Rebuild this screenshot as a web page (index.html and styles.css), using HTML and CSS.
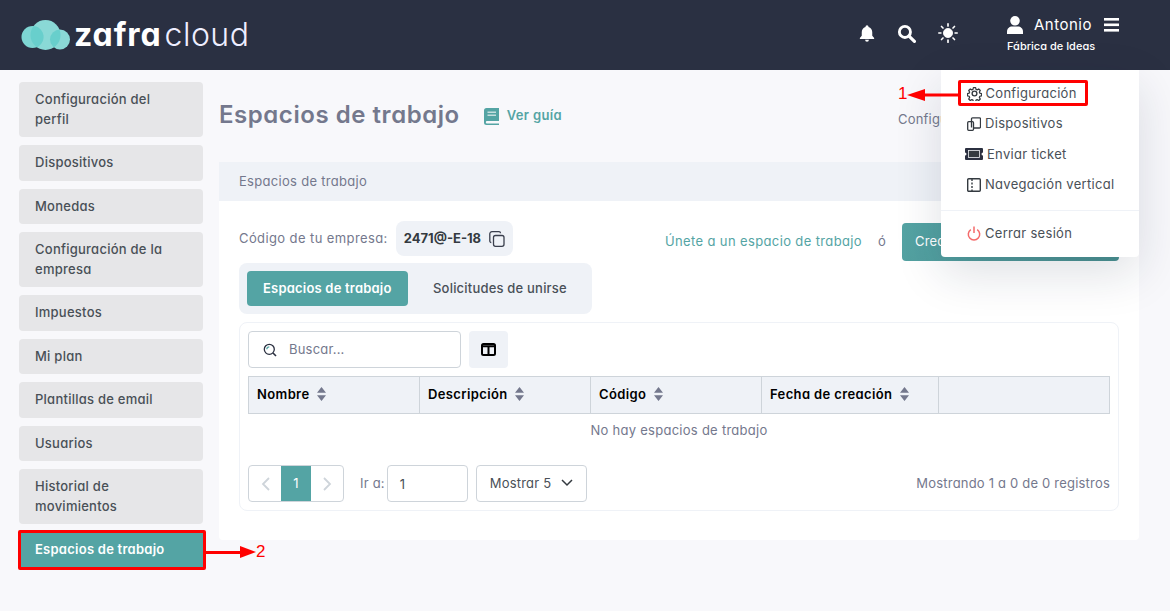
FILE: index.html
```html
<!DOCTYPE html>
<html lang="es">
<head>
<meta charset="utf-8">
<title>Espacios de trabajo</title>
<link rel="stylesheet" href="styles.css">
</head>
<body>
<header class="topbar">
  <div class="logo">
    <svg class="logo-cloud" width="50" height="32" viewBox="0 0 50 32">
      <defs><clipPath id="big"><circle cx="24.500" cy="16" r="15"/></clipPath></defs>
      <circle cx="24.500" cy="16" r="15" fill="#8ad9d6"/>
      <circle cx="11.500" cy="18" r="11" fill="#7ed6d3"/>
      <circle cx="39" cy="20.500" r="10" fill="#8ad9d6"/>
      <g clip-path="url(#big)"><circle cx="11.500" cy="18" r="11" fill="#68cfcc"/><circle cx="39" cy="20.500" r="10" fill="#68cfcc"/></g>
    </svg>
    <span class="logo-a">zafra</span><span class="logo-b">cloud</span>
  </div>
  <div class="top-icons">
    <svg width="18" height="18" viewBox="0 0 24 24" fill="#fff"><path d="M12 1.500a2 2 0 0 0-2 2v.6C6.800 5 5 7.700 5 11v4.500L2.500 18.500V20h19v-1.500L19 15.500V11c0-3.300-1.800-6-5-6.900v-.6a2 2 0 0 0-2-2z"/><path d="M9.500 21a2.500 2.500 0 0 0 5 0z"/></svg>
    <svg width="19" height="19" viewBox="0 0 24 24" fill="none" stroke="#fff"><circle cx="10" cy="10" r="7" stroke-width="3.600"/><path d="M15.500 15.500 22 22" stroke-width="4" stroke-linecap="round"/></svg>
    <svg class="sun" width="20" height="20" viewBox="0 0 24 24" fill="#fff" stroke="#fff"><circle cx="12" cy="12" r="5.500"/><path d="M12 1v2.500M12 20.500V23M1 12h2.500M20.500 12H23M4.200 4.200 6 6M18 18l1.800 1.800M4.200 19.800 6 18M18 6l1.800-1.800" stroke-width="2" stroke-linecap="round"/></svg>
  </div>
  <div class="account">
    <div class="account-top">
      <svg width="16" height="18" viewBox="0 0 16 18" fill="#fff"><circle cx="8" cy="4.800" r="4.800"/><path d="M0 18v-2.500C0 12.500 2.500 10.500 5 10.500h6c2.500 0 5 2 5 5V18z"/></svg>
      <span class="account-name">Antonio</span>
      <svg width="16" height="14" viewBox="0 0 16 14" fill="#fff"><rect y="0" width="15" height="2.600"/><rect y="5.500" width="15" height="2.600"/><rect y="11" width="15" height="2.600"/></svg>
    </div>
    <div class="account-org">Fábrica de Ideas</div>
  </div>
</header>

<div class="layout">
  <nav class="side">
    <a class="side-item">Configuración del perfil</a>
    <a class="side-item">Dispositivos</a>
    <a class="side-item">Monedas</a>
    <a class="side-item">Configuración de la empresa</a>
    <a class="side-item">Impuestos</a>
    <a class="side-item">Mi plan</a>
    <a class="side-item">Plantillas de email</a>
    <a class="side-item">Usuarios</a>
    <a class="side-item">Historial de movimientos</a>
    <a class="side-item side-active">Espacios de trabajo</a>
  </nav>

  <main class="main">
    <div class="page-head">
      <h1 class="page-title">Espacios de trabajo</h1>
      <a class="guide">
        <svg width="15" height="17" viewBox="0 0 15 17" fill="#54a4a4"><path d="M2.500 0H15v13H3a1.200 1.200 0 0 0 0 2.400h12V17H2.500A2.500 2.500 0 0 1 0 14.500v-12A2.500 2.500 0 0 1 2.500 0z"/><path d="M3.500 3.500h8.500v1.400H3.500zM3.500 6.500h8.500v1.400H3.500z" fill="#c5dede"/></svg>
        Ver guía
      </a>
      <span class="crumb">Configuración</span>
    </div>

    <section class="card">
      <div class="card-head">Espacios de trabajo</div>
      <div class="card-body">
        <div class="code-row">
          <div class="code-left">
            <span class="code-label">Código de tu empresa:</span>
            <span class="code-pill">2471@-E-18
              <svg width="16" height="16" viewBox="0 0 16 16" fill="none" stroke="#3a3f4d" stroke-width="1.300"><rect x="4.500" y="4.500" width="10.500" height="10.800" rx="2"/><path d="M11.500 2.200V2a1.500 1.500 0 0 0-1.500-1.300H3A2.200 2.200 0 0 0 .8 3v7a1.500 1.500 0 0 0 1.500 1.500"/></svg>
            </span>
          </div>
          <div class="code-right">
            <a class="join">Únete a un espacio de trabajo</a>
            <span class="or">ó</span>
            <button class="create">Crear espacio de trabajo</button>
          </div>
        </div>

        <div class="tabs">
          <span class="tab tab-on">Espacios de trabajo</span>
          <span class="tab">Solicitudes de unirse</span>
        </div>

        <div class="table-box">
          <div class="tools">
            <label class="search">
              <svg width="14" height="14" viewBox="0 0 14 14" fill="none" stroke="#2b3040" stroke-width="1.300"><circle cx="6.300" cy="6.300" r="5"/><path d="M10 10l3 3" stroke-width="1.600"/><path d="M3.800 6.300a2.500 2.500 0 0 1 2.500-2.500" stroke="#54a4a4"/></svg>
              <span class="search-ph">Buscar...</span>
            </label>
            <button class="col-btn"><svg width="15" height="13" viewBox="0 0 15 13" fill="none" stroke="#000" stroke-width="2"><rect x="1" y="1" width="13" height="11" rx="1.500"/><path d="M7.500 3v9M1 3.200h13" /></svg></button>
          </div>
          <table class="grid">
            <colgroup><col class="c1"><col class="c2"><col class="c3"><col class="c4"><col class="c5"></colgroup>
            <thead>
              <tr>
                <th>Nombre <svg class="sort" width="9" height="14" viewBox="0 0 9 14"><path d="M4.500 0 9 5.800H0zM4.500 14 0 8.200h9z"/></svg></th>
                <th>Descripción <svg class="sort" width="9" height="14" viewBox="0 0 9 14"><path d="M4.500 0 9 5.800H0zM4.500 14 0 8.200h9z"/></svg></th>
                <th>Código <svg class="sort" width="9" height="14" viewBox="0 0 9 14"><path d="M4.500 0 9 5.800H0zM4.500 14 0 8.200h9z"/></svg></th>
                <th>Fecha de creación <svg class="sort" width="9" height="14" viewBox="0 0 9 14"><path d="M4.500 0 9 5.800H0zM4.500 14 0 8.200h9z"/></svg></th>
                <th></th>
              </tr>
            </thead>
            <tbody><tr><td class="empty" colspan="5">No hay espacios de trabajo</td></tr></tbody>
          </table>
          <div class="pager">
            <div class="pages">
              <span class="pg"><svg width="9" height="14" viewBox="0 0 9 14" fill="none" stroke="#ced4da" stroke-width="1.800"><path d="M8 1 2 7l6 6"/></svg></span>
              <span class="pg pg-on">1</span>
              <span class="pg"><svg width="9" height="14" viewBox="0 0 9 14" fill="none" stroke="#ced4da" stroke-width="1.800"><path d="M1 1l6 6-6 6"/></svg></span>
            </div>
            <span class="goto">Ir a:</span>
            <span class="goto-input">1</span>
            <span class="show"><span class="show-label">Mostrar 5</span>
              <svg width="12" height="8" viewBox="0 0 12 8" fill="none" stroke="#343a40" stroke-width="1.500"><path d="M1 1l5 5 5-5"/></svg>
            </span>
            <span class="total">Mostrando 1 a 0 de 0 registros</span>
          </div>
        </div>
      </div>
    </section>
  </main>
</div>

<div class="menu">
  <a class="menu-item">
    <svg class="mi mi-gear" width="15" height="15" viewBox="0 0 24 24" fill="none" stroke="#343a40" stroke-width="2.200" stroke-linejoin="round"><circle cx="12" cy="12" r="3.800"/><path d="M10 1.500h4l.7 3.200 2 .9 2.800-1.700 2.800 2.800-1.700 2.800.9 2 3 .7v4l-3 .7-.9 2 1.700 2.800-2.800 2.800-2.800-1.700-2 .9-.7 3h-4l-.7-3-2-.9-2.800 1.700-2.800-2.800 1.700-2.800-.9-2-3-.7v-4l3-.7.9-2-1.700-2.800 2.800-2.800 2.800 1.700 2-.9z" transform="translate(1.200 1.200) scale(.9)"/></svg>
    Configuración</a>
  <a class="menu-item">
    <svg class="mi" width="14" height="14" viewBox="0 0 14 14" fill="none" stroke="#343a40" stroke-width="1.300"><path d="M4.500 10.500V1.800a1 1 0 0 1 1-1h7a1 1 0 0 1 1 1V10a1 1 0 0 1-1 1H7"/><rect x=".7" y="4.700" width="5.800" height="8.600" rx="1"/></svg>
    Dispositivos</a>
  <a class="menu-item">
    <svg class="mi mi-wide" width="18" height="12" viewBox="0 0 18 12"><path fill="#2b3040" d="M1 0h16a1 1 0 0 1 1 1v3.500a1.500 1.500 0 0 0 0 3V11a1 1 0 0 1-1 1H1a1 1 0 0 1-1-1V7.500a1.500 1.500 0 0 0 0-3V1a1 1 0 0 1 1-1z"/><rect x="3.500" y="2.500" width="11" height="7" fill="#343a40" stroke="#eef0f4" stroke-width=".8"/></svg>
    Enviar ticket</a>
  <a class="menu-item">
    <svg class="mi" width="14" height="14" viewBox="0 0 14 14" fill="none" stroke="#343a40" stroke-width="1.400"><rect x=".7" y=".7" width="12.600" height="12.600" rx="1"/><path d="M5 1v2M5 4.500v2M5 8v2M5 11.500V13"/></svg>
    Navegación vertical</a>
  <div class="menu-sep"></div>
  <a class="menu-item">
    <svg class="mi" width="14" height="15" viewBox="0 0 14 15" fill="none" stroke="#f46a6a" stroke-width="1.500"><path d="M7 .5v6.500"/><path d="M3.800 3.600a5.700 5.700 0 1 0 6.400 0"/></svg>
    Cerrar sesión</a>
</div>

<div class="mark mark-config"></div>
<div class="mark mark-side"></div>
<svg class="arrow arrow-1" width="54" height="16" viewBox="0 0 54 16"><rect x="18" y="6.500" width="36" height="3" fill="#f00"/><path d="M2 8l18-6v12z" fill="#f00"/></svg>
<span class="num num-1">1</span>
<svg class="arrow arrow-2" width="54" height="16" viewBox="0 0 54 16"><rect x="0" y="7" width="38" height="3" fill="#f00"/><path d="M52 8 36 2v12z" fill="#f00"/></svg>
<span class="num num-2">2</span>
</body>
</html>
```

FILE: styles.css
```css
* { box-sizing: border-box; }
html, body { margin: 0; height: 611px; overflow: hidden; }
body {
  position: relative;
  background: #f8f8fb;
  font-family: Inter, "Liberation Sans", sans-serif;
  font-feature-settings: "cv11";
  font-size: 13px;
  line-height: 19.5px;
  color: #495057;
  letter-spacing: .2px;
}
.topbar {
  height: 70px;
  background: #2a3042;
  display: flex;
  align-items: flex-start;
  color: #fff;
}
.logo { display: flex; align-items: center; height: 70px; margin-left: 21px; width: 820px; }
.logo-cloud { margin-right: 3px; }
.logo-a { font-size: 32px; font-weight: 700; letter-spacing: .9px; line-height: 32px; }
.logo-b { font-size: 32px; font-weight: 300; letter-spacing: .5px; line-height: 32px; margin-left: 3px; color: #eef; }
.top-icons { display: flex; align-items: center; gap: 21px; height: 66px; margin-left: 17px; }
.sun { margin-left: 1px; margin-right: -1px; }
.account { margin-left: 50px; padding-top: 15px; }
.account-top { display: flex; align-items: center; height: 20px; }
.account-name { font-size: 15px; margin-left: 11px; margin-right: 12px; letter-spacing: .5px; }
.account-org { font-size: 11px; font-weight: 500; margin-top: 3px; line-height: 16px; letter-spacing: 0; }

.layout { display: flex; align-items: flex-start; padding: 12px 31px 0 19px; }
.side { width: 184px; flex: none; display: flex; flex-direction: column; gap: 8px; }
.side-item {
  display: block;
  padding: 8px 30px 8px 16px;
  background: #e6e6e8;
  border-radius: 4px;
  font-weight: 500;
  color: #495057;
  letter-spacing: .25px;
}
.side-active { background: #54a4a4; color: #fff; font-weight: 600; border-radius: 0; padding-right: 8px; }

.main { flex: 1; margin-left: 16px; min-width: 0; }
.page-head { display: flex; align-items: center; height: 80px; padding-bottom: 14px; position: relative; }
.page-title { margin: 0; font-size: 24px; font-weight: 600; color: #74788d; line-height: 32px; letter-spacing: .55px; }
.guide { display: flex; align-items: center; gap: 8px; margin-left: 24px; padding-top: 2px; color: #54a4a4; font-weight: 600; letter-spacing: .35px; }
.crumb { margin-left: auto; color: #74788d; padding-top: 9px; padding-right: 143px; white-space: nowrap; width: 241px; }

.card { background: #fff; border-radius: 4px; }
.card-head { height: 39px; padding: 9.500px 20px; background: #eff2f7; color: #74788d; letter-spacing: .3px; }
.card-body { padding: 20px; height: 339px; }
.code-row { display: flex; justify-content: space-between; height: 42px; }
.code-left { display: flex; align-items: flex-start; gap: 8px; }
.code-label { line-height: 35px; color: #74788d; letter-spacing: .4px; }
.code-pill {
  display: flex; align-items: center; gap: 8px;
  height: 35px; padding: 0 8px;
  background: #eff2f7; border-radius: 8px;
  font-weight: 700; color: #343a40; letter-spacing: 0;
}
.code-right { display: flex; align-items: flex-start; margin-top: 2px; }
.join { color: #54a4a4; line-height: 37px; letter-spacing: .37px; }
.or { color: #74788d; line-height: 37px; margin: 0 16px; }
.create {
  width: 217px; height: 38px; padding: 0 13px;
  background: linear-gradient(135deg, #54a4a4, #4a9090);
  border: 0; border-radius: 4px;
  color: #fff; font: inherit; letter-spacing: inherit; text-align: left;
}
.tabs {
  display: flex; align-items: center;
  width: 353px; height: 51px; padding: 8px;
  background: #eff2f7; border-radius: 8px;
}
.tab { height: 35px; padding: 0 16px; line-height: 35px; font-weight: 500; color: #495057; white-space: nowrap; margin-left: 9px; }
.tab-on { width: 161px; background: #54a4a4; color: #fff; font-weight: 600; border-radius: 4px; margin-left: 0; }

.table-box {
  margin-top: 8px; height: 189px; padding: 8px;
  border: 1px solid #eff2f7; border-radius: 8px;
}
.tools { display: flex; gap: 8px; height: 37px; }
.search {
  display: flex; align-items: center; gap: 12px;
  width: 213px; padding: 1px 14px 0;
  border: 1px solid #ced4da; border-radius: 4px;
}
.search-ph { color: #74788d; }
.col-btn { width: 39px; border: 0; background: #eff2f7; border-radius: 4px; padding: 3px 0 0; }
.grid { width: 861px; margin-top: 8px; border-collapse: collapse; table-layout: fixed; }
.c1, .c2 { width: 171px; }
.c3 { width: 171px; }
.c4 { width: 177px; }
.c5 { width: 171px; }
.grid th {
  height: 37px; padding: 0 8px 1px;
  background: #eff2f7; border: 1px solid #ced4da;
  text-align: left; color: #000; font-weight: 600; letter-spacing: .38px;
}
.sort { fill: #74788d; margin-left: 4px; vertical-align: -2px; }
.empty { height: 35px; padding: 0 0 1px; text-align: center; color: #74788d; letter-spacing: .27px; }
.pager { display: flex; align-items: center; height: 37px; margin-top: 16px; }
.pages { display: flex; height: 37px; width: 96px; border: 1px solid #ced4da; border-radius: 4px; overflow: hidden; }
.pg { flex: 1; display: flex; align-items: center; justify-content: center; padding-top: 1px; }
.pg-on { flex: 0 0 30px; background: #54a4a4; color: #fff; }
.goto { margin-left: 16px; padding-top: 2px; color: #74788d; white-space: nowrap; }
.goto-input {
  width: 81px; height: 37px; margin-left: 2px; padding: 1px 12px 0;
  border: 1px solid #ced4da; border-radius: 4px; line-height: 35px; color: #495057;
}
.show {
  display: flex; align-items: center; justify-content: space-between;
  width: 111px; height: 37px; margin-left: 8px; padding: 0 13px;
  border: 1px solid #ced4da; border-radius: 4px; color: #495057; white-space: nowrap;
}
.show-label { padding-top: 2px; }
.total { margin-left: auto; padding-top: 2px; color: #74788d; }

.menu {
  position: absolute; left: 941px; top: 70px; width: 198px; height: 187px;
  padding-top: 8px;
  background: #fff; border-radius: 0 0 4px 4px;
  box-shadow: 0 16px 48px rgba(18, 38, 63, .14);
}
.menu-item {
  display: flex; align-items: center; gap: 4px;
  height: 30.500px; padding: 0 24px 0 26px;
  color: #495057; white-space: nowrap;
  letter-spacing: .3px;
}
.mi { flex: none; }
.mi-gear { margin-right: 0; margin-left: -.5px; }
.mi-wide { margin-left: -2px; }
.menu-sep { height: 1px; margin: 10px 0 7px; background: #eff2f7; }

.mark { position: absolute; border: 3px solid #f00; border-radius: 2px; }
.mark-config { left: 958px; top: 80px; width: 130px; height: 26px; }
.mark-side { left: 18px; top: 530px; width: 188px; height: 40px; }
.arrow { position: absolute; }
.arrow-1 { left: 905px; top: 87px; }
.arrow-2 { left: 204px; top: 544px; }
.num { position: absolute; color: #f00; font-family: "Liberation Sans", sans-serif; font-size: 17px; line-height: 18px; letter-spacing: 0; }
.num-1 { left: 898px; top: 85px; }
.num-2 { left: 256px; top: 543px; }
```
